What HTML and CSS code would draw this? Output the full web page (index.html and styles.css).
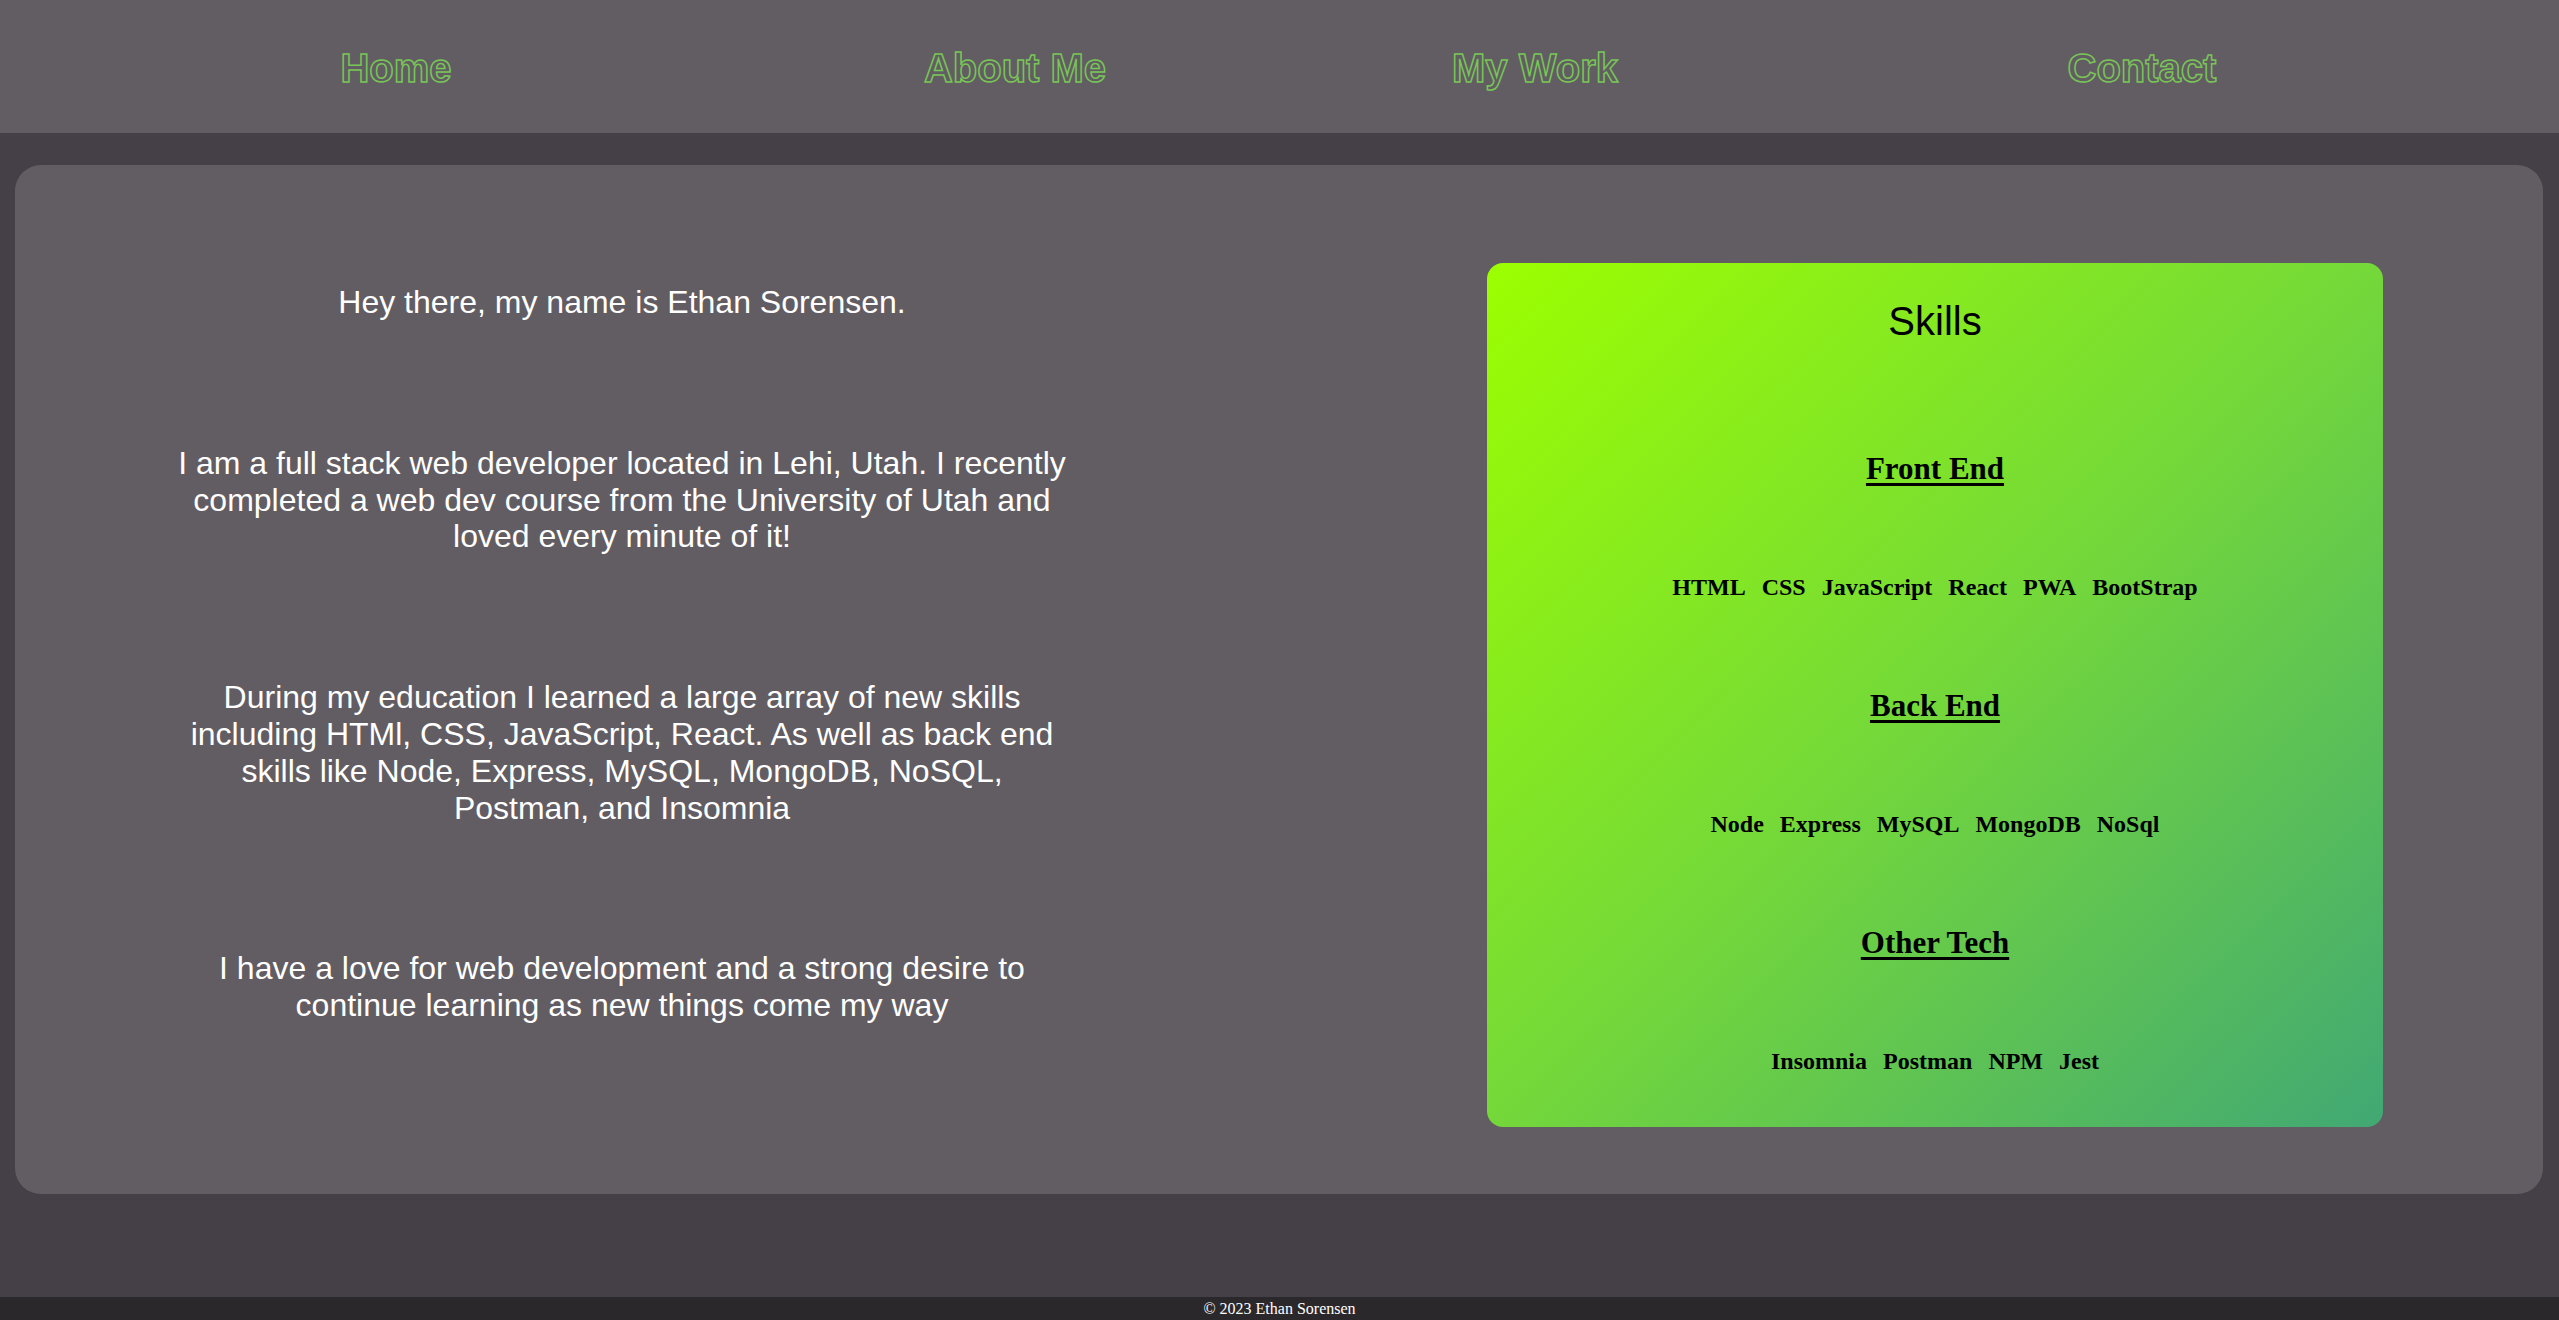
FILE: index.html
```html
<!DOCTYPE html>
<html lang="en">
<head>
<meta charset="utf-8">
<title>Ethan Sorensen - About Me</title>
<link rel="stylesheet" href="styles.css">
</head>
<body>
<header class="site-nav">
  <nav class="nav-grid">
    <a class="nav-link" href="#">Home</a>
    <a class="nav-link" href="#">About Me</a>
    <a class="nav-link" href="#">My Work</a>
    <a class="nav-link" href="#">Contact</a>
  </nav>
</header>
<main class="about-card">
  <section class="bio">
    <p>Hey there, my name is Ethan Sorensen.</p>
    <p>I am a full stack web developer located in Lehi, Utah. I recently completed a web dev course from the University of Utah and loved every minute of it!</p>
    <p>During my education I learned a large array of new skills including HTMl, CSS, JavaScript, React. As well as back end skills like Node, Express, MySQL, MongoDB, NoSQL, Postman, and Insomnia</p>
    <p>I have a love for web development and a strong desire to continue learning as new things come my way</p>
  </section>
  <section class="skills">
    <h2 class="skills-title">Skills</h2>
    <h3 class="skills-heading">Front End</h3>
    <div class="skills-list"><span>HTML</span><span>CSS</span><span>JavaScript</span><span>React</span><span>PWA</span><span>BootStrap</span></div>
    <h3 class="skills-heading">Back End</h3>
    <div class="skills-list"><span>Node</span><span>Express</span><span>MySQL</span><span>MongoDB</span><span>NoSql</span></div>
    <h3 class="skills-heading">Other Tech</h3>
    <div class="skills-list"><span>Insomnia</span><span>Postman</span><span>NPM</span><span>Jest</span></div>
  </section>
</main>
<footer class="site-footer">© 2023 Ethan Sorensen</footer>
</body>
</html>
```
FILE: styles.css
```css
* { box-sizing: border-box; }

html, body { height: 100%; }

body {
  margin: 0;
  min-height: 100vh;
  display: flex;
  flex-direction: column;
  background: #454047;
  font-family: "Liberation Sans", Arial, sans-serif;
}

.site-nav {
  height: 133px;
  background: #625d63;
  display: flex;
  align-items: center;
}

.nav-grid {
  display: grid;
  grid-template-columns: 792px 446px 594px 620px;
  width: 100%;
  padding-top: 2px;
}

.nav-link {
  text-align: center;
  font-family: "Liberation Sans", Arial, sans-serif;
  font-weight: bold;
  font-size: 40px;
  line-height: 46px;
  text-decoration: none;
  color: transparent;
  -webkit-text-stroke: 1.5px #78c656;
}

.about-card {
  margin: 32px 16px 0 15px;
  height: 1029px;
  background: #625d63;
  border-radius: 26px;
  display: flex;
  align-items: flex-start;
  gap: 415px;
  padding: 98px 160px 67px 157px;
}

.bio {
  width: 900px;
  flex: none;
  display: flex;
  flex-direction: column;
  gap: 124px;
  padding-top: 21px;
  color: #ffffff;
  text-align: center;
  font-size: 32px;
  line-height: 36.8px;
}

.bio p { margin: 0; }

.skills {
  width: 896px;
  height: 864px;
  flex: none;
  border-radius: 16px;
  background: linear-gradient(to bottom right, #9cff00 0%, #74d83a 50%, #41a874 100%);
  display: flex;
  flex-direction: column;
  align-items: center;
  gap: 86.5px;
  padding-top: 35px;
  color: #000;
}

.skills-title {
  margin: 0 0 20px;
  font-family: "Liberation Sans", Arial, sans-serif;
  font-weight: normal;
  font-size: 40px;
  line-height: 46px;
}

.skills-heading {
  margin: 0;
  font-family: "Liberation Serif", "Times New Roman", serif;
  font-weight: bold;
  font-size: 31px;
  line-height: 36px;
  text-decoration: underline;
  text-decoration-thickness: 3px;
  text-underline-offset: 4px;
}

.skills-list {
  display: flex;
  gap: 16px;
  font-family: "Liberation Serif", "Times New Roman", serif;
  font-weight: bold;
  font-size: 24px;
  line-height: 28px;
}

.site-footer {
  margin-top: auto;
  height: 23px;
  background: #2b282c;
  color: #ffffff;
  text-align: center;
  font-family: "Liberation Serif", "Times New Roman", serif;
  font-size: 16px;
  line-height: 23px;
}
```
